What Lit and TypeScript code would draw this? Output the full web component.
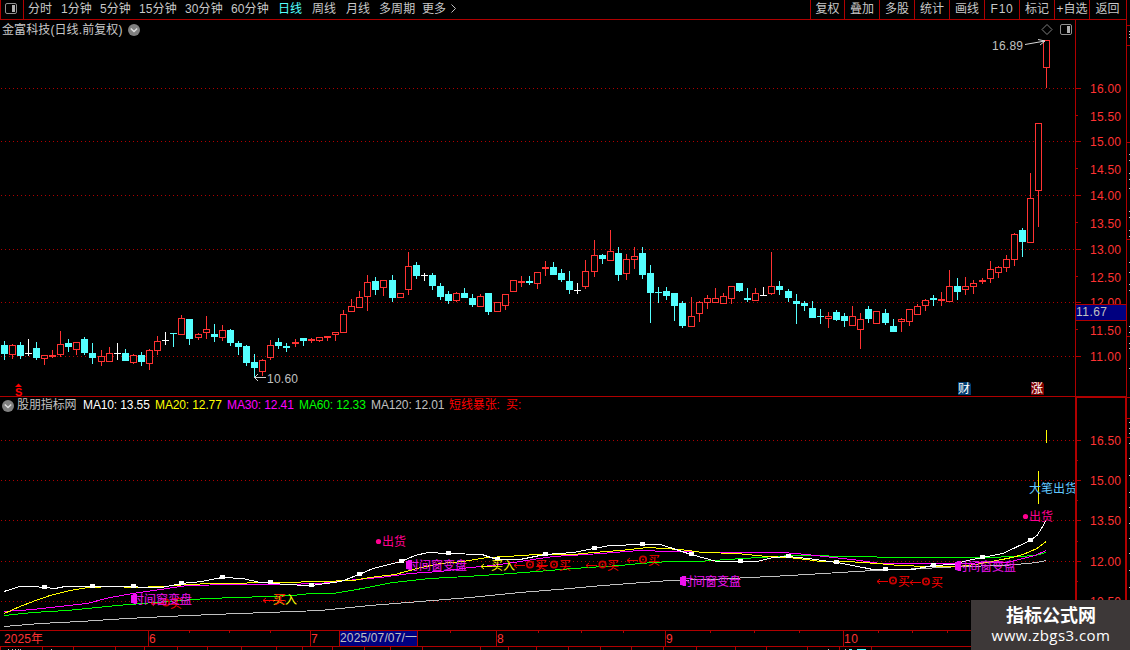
import { LitElement, html, svg, css } from "lit";
import { customElement } from "lit/decorators.js";

type Candle = [number, number, number, number, number, "u" | "d" | "w"];

// x, high, body top, body bottom, low, kind
const CANDLES: Candle[] = [
  [4,341,345,354,360,"d"],[12,344,345,355,359,"u"],[20,342,345,356,359,"d"],[28,339,353,354,356,"w"],
  [36,342,348,358,360,"d"],[44,355,355,359,365,"u"],[52,350,355,357,358,"u"],[60,331,344,355,357,"u"],
  [68,339,343,347,352,"d"],[76,342,342,350,355,"u"],[84,337,339,353,355,"d"],[92,343,353,358,364,"d"],
  [101,350,356,362,366,"u"],[109,347,353,362,362,"u"],[117,343,353,354,360,"w"],[125,349,353,361,361,"d"],
  [133,354,355,363,364,"u"],[141,352,355,362,366,"d"],[149,349,350,364,370,"u"],[157,336,341,351,355,"u"],
  [165,332,340,341,345,"w"],[173,333,333,334,347,"d"],[181,315,318,335,335,"u"],[189,319,319,339,345,"d"],
  [198,333,334,338,340,"u"],[206,316,329,333,339,"u"],[214,324,334,337,342,"d"],[222,325,330,338,341,"u"],
  [230,329,330,343,346,"d"],[238,341,343,347,355,"d"],[246,345,346,363,366,"d"],[254,354,362,368,378,"d"],
  [262,359,360,372,376,"u"],[270,340,345,358,360,"u"],[278,338,342,346,349,"d"],[286,343,346,348,352,"d"],
  [295,339,342,344,347,"u"],[303,338,338,341,346,"d"],[311,338,339,341,343,"u"],[319,337,337,341,342,"u"],
  [327,336,336,338,341,"u"],[335,332,332,335,341,"u"],[343,310,314,333,333,"u"],[351,299,306,312,312,"u"],
  [359,291,297,308,308,"u"],[367,275,282,297,311,"u"],[375,277,281,290,295,"d"],[383,280,280,288,296,"u"],
  [392,275,280,298,302,"d"],[400,293,293,298,298,"u"],[408,252,266,290,295,"u"],[416,262,265,276,279,"d"],
  [424,273,275,276,281,"w"],[432,273,275,286,290,"d"],[440,283,286,297,300,"d"],[448,291,294,301,304,"d"],
  [456,292,293,301,302,"u"],[464,288,293,298,298,"d"],[472,294,298,305,307,"d"],[480,294,296,307,307,"u"],
  [488,293,293,312,315,"d"],[497,302,302,312,312,"u"],[505,294,294,306,310,"u"],[513,280,280,292,292,"u"],
  [521,276,281,283,287,"u"],[529,276,281,283,285,"d"],[537,272,272,284,289,"u"],[545,261,267,269,276,"u"],
  [553,262,267,275,275,"d"],[561,269,273,280,282,"d"],[569,271,281,290,294,"d"],[577,283,290,291,294,"w"],
  [585,260,271,287,289,"u"],[594,240,255,272,277,"u"],[602,254,255,259,264,"d"],[610,230,251,261,261,"u"],
  [618,247,253,275,281,"d"],[626,254,259,274,280,"u"],[634,247,256,260,269,"u"],[642,247,253,275,279,"d"],
  [650,265,273,293,323,"d"],[658,287,292,293,303,"d"],[666,287,291,296,300,"d"],[674,293,293,306,321,"d"],
  [682,301,303,326,328,"d"],[691,297,316,327,327,"u"],[699,301,302,314,322,"u"],[707,295,298,303,309,"u"],
  [715,288,298,303,303,"u"],[723,293,296,304,304,"u"],[731,286,286,299,304,"u"],[739,283,283,291,292,"d"],
  [747,288,298,300,302,"d"],[755,288,293,301,301,"u"],[763,287,295,296,296,"w"],[771,252,286,294,295,"u"],
  [779,281,286,290,295,"d"],[788,289,291,298,302,"d"],[796,294,301,304,324,"d"],[804,301,303,306,311,"d"],
  [812,301,308,318,318,"d"],[820,309,316,317,324,"d"],[828,312,316,319,328,"u"],[836,310,312,320,321,"d"],
  [844,313,316,321,327,"d"],[852,306,316,326,326,"u"],[860,313,319,330,349,"u"],[868,306,309,319,323,"d"],
  [876,311,311,324,324,"u"],[885,309,313,323,325,"d"],[893,319,326,332,332,"d"],[901,318,319,322,332,"u"],
  [909,309,309,322,326,"u"],[917,304,306,315,315,"u"],[925,299,300,306,311,"u"],[933,295,298,300,306,"d"],
  [941,292,299,301,306,"u"],[949,270,286,302,302,"u"],[957,278,286,292,300,"d"],[965,277,286,290,295,"u"],
  [973,280,283,287,294,"u"],[982,278,280,282,284,"u"],[990,261,269,279,283,"u"],[998,266,267,273,278,"u"],
  [1006,255,259,268,272,"u"],[1014,233,234,260,266,"u"],[1022,228,230,242,257,"d"],[1030,173,198,243,243,"u"],
  [1038,123,123,191,227,"u"],[1046,40,40,68,88,"u"],
];

const COLORS = { u: "#ff3232", d: "#54ffff", w: "#ffffff" };

const AXIS_TOP: [string, number, number][] = [
  ["16.00",88,93],["15.50",115,121],["15.00",141,146],["14.50",168,174],["14.00",195,200],["13.50",222,228],
  ["13.00",249,254],["12.50",276,282],["12.00",302,307],["11.50",329,335],["11.00",356,361],
];
const AXIS_LOW: [string, number, number][] = [
  ["16.50",440,445],["15.00",480,485],["13.50",520,525],["12.00",561,566],["10.50",601,606],
];

const MA: { color: string; pts: string }[] = [
  { color: "#c0c0c0", pts: "4,626 40,623 80,621 127,618 167,616 213,614 267,612 320,610 370,605 420,601 470,597 520,592 570,588 603,585 670,580 710,579 750,577 790,575 840,572 873,570 900,569 943,567 960,566 1003,565 1027,563 1037,562 1046,560" },
  { color: "#00ff00", pts: "4,615 33,612 67,610 117,605 167,601 207,598 267,596 293,595 310,593 333,593 357,589 393,582 430,578 467,576 497,574 537,571 573,568 620,565 640,563 670,561 697,561 743,558 793,555 863,556 890,557 983,557 1020,556 1035,555 1046,552" },
  { color: "#ff00ff", pts: "4,611 33,609 60,606 87,603 110,597 133,593 167,588 187,585 233,584 283,584 320,583 347,580 380,577 410,573 440,571 470,567 493,565 520,561 553,556 587,554 640,550 670,551 727,552 783,552 807,554 833,557 860,560 880,563 943,563 1007,562 1023,558 1035,555 1046,550" },
  { color: "#ffff00", pts: "4,613 20,606 33,601 50,595 70,590 88,587 115,586 133,587 163,586 187,584 213,583 283,582 320,581 353,580 370,577 395,574 417,568 440,563 463,561 487,557 507,556 537,554 573,554 593,552 620,550 648,547 680,549 703,552 737,553 767,556 788,557 807,559 820,561 847,561 877,563 900,565 927,566 958,566 975,564 997,560 1012,557 1023,554 1037,548 1046,541" },
  { color: "#ffffff", pts: "4,591 20,586 26,586 33,586 44,587 55,588 65,586 92,586 133,586 143,587 162,587 181,583 202,581 222,577 243,578 260,582 270,582 283,584 311,585 341,581 359,574 373,568 401,561 415,555 428,552 448,553 482,554 497,559 520,559 545,554 573,552 594,548 610,545 642,544 660,544 670,547 691,554 717,561 740,561 757,561 773,557 788,556 808,558 837,562 863,567 873,569 885,569 913,569 933,565 953,564 968,560 982,557 1003,553 1030,540 1037,535 1042,527 1046,520" },
];

const MARKS: [number, number][] = [
  [44,587],[92,586],[133,586],[181,583],[222,577],[270,582],[311,585],[359,574],[401,561],[448,553],[497,559],
  [545,554],[594,548],[642,544],[691,554],[740,561],[788,556],[836,562],[885,569],[933,565],[982,557],[1030,540],
];

const PERIODS = ["分时", "1分钟", "5分钟", "15分钟", "30分钟", "60分钟", "日线", "周线", "月线", "多周期", "更多"];
const TOOLS = ["复权", "叠加", "多股", "统计", "画线", "F10", "标记", "+自选", "返回"];
const LEGEND: [string, string][] = [
  ["股朋指标网", "grey"], ["MA10: 13.55", "white"], ["MA20: 12.77", "yellow"], ["MA30: 12.41", "magenta"],
  ["MA60: 12.33", "green"], ["MA120: 12.01", "grey"], ["短线暴张:", "red"], ["买:", "red"],
];

const hline = (x1: number, x2: number, y: number, c = "#b00000", h = 1) =>
  svg`<rect x=${x1} y=${y} width=${x2 - x1} height=${h} fill=${c}/>`;
const vline = (x: number, y1: number, y2: number, c = "#b00000", w = 1) =>
  svg`<rect x=${x} y=${y1} width=${w} height=${y2 - y1} fill=${c}/>`;
const dotted = (y: number) =>
  svg`<line x1="1" x2="1074" y1=${y + 0.5} y2=${y + 0.5} stroke="#b00000" stroke-dasharray="1 3"/>`;
const label = (s: string, x: number, y: number, w: number, c = "#ff3232") =>
  svg`<text x=${x} y=${y} textLength=${w} fill=${c}>${s}</text>`;

const candle = ([x, hi, top, bot, lo, k]: Candle) => {
  const c = COLORS[k];
  const hollow = k === "u" && bot - top > 2;
  return svg`${hi < top ? vline(x, hi, top, c) : ""}${lo > bot ? vline(x, bot, lo, c) : ""}
    ${hollow
      ? svg`<rect x=${x - 2.5} y=${top + 0.5} width="6" height=${bot - top - 1} fill="#000" stroke=${c}/>`
      : svg`<rect x=${x - 3} y=${top} width="7" height=${bot - top} fill=${c}/>`}`;
};

const arrow = (x: number, y: number, w: number, c: string) =>
  svg`<path d=${`M${x + w} ${y + 0.5}H${x}M${x + 3} ${y - 2}L${x} ${y + 0.5}L${x + 3} ${y + 3}`} stroke=${c} fill="none"/>`;

const buySignal = (ax: number, aw: number, cx: number, tx: number, base: number) => svg`
  ${arrow(ax, base - 5, aw, "#e80000")}
  <circle cx=${cx} cy=${base - 5.5} r="3.2" fill="none" stroke="#c80000" stroke-width="1.8"/>
  <rect x=${cx - 0.7} y=${base - 6.2} width="1.5" height="1.5" fill="#f00"/>
  <text x=${tx} y=${base} fill="#ff0000">买</text>`;

const timeWindow = (x: number, base: number) => svg`
  <text x=${x + 1} y=${base} fill="#f010f0">时间窗变盘</text>
  <path d=${`M${x} ${base - 9}h2v-1h4v10h-3v-1h-3z`} fill="#f010f0"/>`;

const chevron = html`<svg width="12" height="12" viewBox="0 0 12 12"><circle cx="6" cy="6" r="6" fill="#808080"/><path d="M2.8 4.6L6 7.6L9.2 4.6" fill="none" stroke="#e0e0e0" stroke-width="1.4"/></svg>`;

@customElement("app-root")
export class AppRoot extends LitElement {
  static styles = css`
    :host { display: block; width: 1130px; height: 650px; overflow: hidden; background: #000; position: relative;
      font: 12px/16px "Liberation Sans", "Noto Sans CJK SC", sans-serif; color: #c8c8c8; }
    svg { display: block; flex: none; }
    text { font: 12px "Liberation Sans", "Noto Sans CJK SC", sans-serif; white-space: pre; }
    .rights { font-weight: bold; font-size: 11px; }
    .shell { display: grid; grid-template-columns: 1127px 3px; height: 650px; }
    .main { display: flex; flex-direction: column; min-width: 0; }
    .bar { display: flex; box-sizing: border-box; height: 20px; border-bottom: 1px solid #b00000; border-right: 1px solid #b00000; white-space: nowrap; }
    .toggle { width: 22px; border-left: 1px solid #b00000; border-right: 1px solid #b00000; }
    .periods { display: grid; grid-template-columns: 33px 39px 39px 46px 46px 47px 34px 34px 33px 43px 28px 10px; padding-left: 4px; line-height: 19px; letter-spacing: .1px; flex: 1; }
    .active { color: #54ffff; }
    .tools { display: flex; line-height: 19px; }
    .tool { box-sizing: border-box; width: 35px; border-left: 1px solid #b00000; text-align: center; }
    .tool:first-child { width: 34px; }
    .tool:nth-child(6) { letter-spacing: .7px; }
    .tool:last-child { width: 37px; padding-right: 1px; }
    .title { display: flex; height: 19px; box-sizing: border-box; padding-left: 2px; align-items: center; }
    .name { width: 126px; line-height: 20px; letter-spacing: .1px; white-space: nowrap; }
    .corner { margin-left: auto; margin-right: 2px; }
    .legend { display: grid; grid-template-columns: 15px 66px 72px 72px 72px 72px 78px 57px 30px; height: 17px; padding-left: 2px; align-items: center; white-space: nowrap; letter-spacing: -.12px; line-height: 17px; box-sizing: border-box;
      border-top: 1px solid #b00000; }
    .axis-edge { display: grid; grid-template-columns: 1075px 52px; }
    .cell { border: 2px solid #b00000; border-bottom: 0; box-sizing: border-box; height: 17px; }
    .grey { color: #c0c0c0; } .white { color: #fff; } .yellow { color: #ff0; } .magenta { color: #f0f; }
    .green { color: #0f0; } .red { color: #f00; }
    .brand { position: absolute; right: 0; bottom: 0; width: 159px; height: 50px; background: #3d3838; color: #fff; text-align: center; box-sizing: border-box; padding: 3px 0 0 1px; }
    .brand-name { font: bold 18px/23px "Noto Sans CJK SC", sans-serif; }
    .brand-url { font: 15px/18px "Open Sans", sans-serif; letter-spacing: .45px; }
  `;

  render() {
    return html`
      <div class="shell">
        <div class="main">
          <div class="bar">
            <svg class="toggle" width="22" height="19" viewBox="1 0 22 19">
              <rect x="5.5" y="3.5" width="11" height="10" rx="1.5" fill="none" stroke="#909090"/>
              <rect x="12" y="5" width="3" height="7" fill="#b0b0b0"/>
            </svg>
            <div class="periods">
              ${PERIODS.map((p) => html`<span class=${p === "日线" ? "active" : ""}>${p}</span>`)}
              <svg width="8" height="18" viewBox="0 0 8 18"><path d="M1.5 4.5L5.5 8.5L1.5 12.5" fill="none" stroke="#c0c0c0"/></svg>
            </div>
            <div class="tools">${TOOLS.map((t) => html`<span class="tool">${t}</span>`)}</div>
          </div>
          <div class="axis-edge">
            <div class="title">
              <span class="name">金富科技(日线.前复权)</span>${chevron}
              <svg class="corner" width="32" height="19" viewBox="1041 20 32 19">
                <path d="M1042 29.5L1047 24.5L1052 29.5L1047 34.5Z" fill="none" stroke="#808080"/>
                <rect x="1060.5" y="24.5" width="11" height="10" rx="1.5" fill="none" stroke="#909090"/>
                <rect x="1067" y="26" width="3" height="7" fill="#b0b0b0"/>
              </svg>
            </div>
            <svg width="52" height="19" viewBox="1075 20 52 19">${vline(1075, 20, 39)}${vline(1126, 20, 39)}</svg>
          </div>
          ${this.pricePanel()}
          <div class="axis-edge">
            <div class="legend">${chevron}${LEGEND.map(([t, c]) => html`<span class=${c}>${t}</span>`)}</div>
            <div class="cell"></div>
          </div>
          ${this.indicatorPanel()}
          ${this.dateBar()}
        </div>
        ${this.sideStrip()}
      </div>
      <div class="brand"><div class="brand-name">指标公式网</div><div class="brand-url">www.zbgs3.com</div></div>
    `;
  }

  private pricePanel() {
    return html`<svg width="1127" height="357" viewBox="0 39 1127 357">
      ${[88, 141, 195, 249, 302, 356].map(dotted)}
      ${CANDLES.map(candle)}
      ${label("16.89", 992, 50, 31, "#c0c0c0")}
      <path d="M1025 44.5L1045 41M1038 39.5L1045 41L1040 45" stroke="#d8d8d8" fill="none"/>
      ${label("10.60", 267, 383, 31, "#c0c0c0")}
      <path d="M254 377.5H266M258 374L254.5 377.5L258 381" stroke="#d0d0d0" fill="none"/>
      <path d="M15 387L18.5 383.5L22 387Z" fill="#f00"/>
      <text class="rights" x="15" y="395.5" fill="#f00">S</text>
      <path d="M958 382h11l2 2v11h-13z" fill="#003c70"/>${label("财", 958, 393, 12, "#fff")}
      <path d="M1031 382h11l2 2v11h-13z" fill="#800000"/>${label("涨", 1031, 393, 12, "#fff")}
      ${vline(1075, 39, 396)}${vline(1126, 39, 396)}
      ${AXIS_TOP.map(([t, y, b], i) => svg`${hline(1076, i % 2 ? 1078 : 1081, y)}${label(t, 1090, b, 31)}`)}
      <rect x="1075.5" y="304.5" width="51" height="16" fill="#000080" stroke="#b00000"/>
      ${label("11.67", 1076, 316, 31, "#c0c0c0")}
    </svg>`;
  }

  private indicatorPanel() {
    return html`<svg width="1127" height="217" viewBox="0 413 1127 217">
      ${[440, 480, 520, 561, 601].map(dotted)}
      ${MA.map((m) => svg`<polyline points=${m.pts} transform="translate(0 .5)" fill="none" stroke=${m.color} shape-rendering="crispEdges"/>`)}
      ${MARKS.map(([x, y]) => svg`<rect x=${x - 2} y=${y - 2} width="5" height="4" fill="#fff"/>`)}
      ${buySignal(151, 13, 166, 170, 608)}
      ${timeWindow(131, 604)}${timeWindow(406, 570)}${timeWindow(680, 586)}${timeWindow(955, 571)}
      ${arrow(263, 600, 14, "#f00")}
      <text x="273" y="604" fill="#ff0">买入</text><text x="274" y="604" fill="#f00">买</text>
      <circle cx="378.5" cy="541.5" r="2.6" fill="#ff0090"/><text x="382" y="546" fill="#ff0090">出货</text>
      ${arrow(481, 566, 11, "#ff0")}<text x="491" y="570" fill="#ff0">买入</text>
      ${buySignal(514, 11, 530, 535, 570)}
      ${buySignal(537, 11, 554, 559, 570)}
      ${buySignal(586, 11, 602.5, 607, 570)}
      ${buySignal(627, 11, 643, 648, 565)}
      ${buySignal(877, 11, 893, 898, 586)}
      ${buySignal(910, 11, 926, 931, 587)}
      ${vline(1038, 471, 504, "#ff0")}${vline(1046, 430, 443, "#ff0")}
      <text x="1029" y="493" fill="#60c8ff">大笔出货</text>
      <circle cx="1025.5" cy="516.5" r="2.6" fill="#ff0090"/><text x="1029" y="521" fill="#ff0090">出货</text>
      <rect x="1075" y="413" width="52" height="217" fill="#000"/>
      ${vline(1075, 413, 630, "#b00000", 2)}${vline(1125, 413, 630, "#b00000", 2)}
      ${AXIS_LOW.map(([t, y, b]) => svg`${hline(1077, 1081, y)}${label(t, 1090, b, 31)}`)}
      ${[460, 500, 541, 581].map((y) => hline(1077, 1078, y))}
    </svg>`;
  }

  private dateBar() {
    return html`<svg width="1127" height="20" viewBox="0 630 1127 20">
      ${hline(0, 1127, 630)}${hline(0, 1127, 646)}
      ${[148, 310, 496, 665, 843].map((x) => vline(x, 630, 646))}
      ${[189, 229, 270, 450, 538, 581, 623, 710, 754, 799, 878, 912, 947].map((x) => vline(x, 631, 633))}
      ${[0, 42, 73, 115, 144, 177, 207, 241, 276, 302, 332, 364, 390, 422, 480, 508, 536, 568, 600, 631, 663, 696, 735, 766, 807, 839, 871].map((x) => vline(x, 646, 650))}
      ${label("2025年", 4, 643, 39)}${label("6", 149, 643, 7)}${label("7", 311, 643, 7)}
      ${label("8", 497, 643, 7)}${label("9", 666, 643, 7)}${label("10", 844, 643, 14)}
      <rect x="339.5" y="630.5" width="78" height="16" fill="#000080" stroke="#b00000"/>
      ${label("2025/07/07/一", 340, 642, 77, "#c0c0c0")}
      ${[8, 12, 15, 18, 20, 51, 828, 845].map((x) => vline(x, 649, 650, "#c0c0c0"))}
      ${hline(849, 852, 649, "#54ffff")}${hline(857, 866, 649, "#54ffff")}
    </svg>`;
  }

  private sideStrip() {
    const dots = [154, 160, 173, 179, 188, 211, 217, 230, 236, 262, 272, 284, 290, 326, 332, 343, 348, 368, 422, 428, 433, 443, 458, 475, 492, 507, 523, 538, 553, 570, 587];
    return html`<svg width="3" height="650" viewBox="1127 0 3 650">
      ${[25, 45, 142, 239, 336, 397, 418, 437].map((y) => hline(1127, 1130, y))}
      ${[31, 34, 37].map((y) => hline(1129, 1130, y, "#c0c0c0"))}
      ${dots.map((y) => hline(1129, 1130, y, "#c0c0c0"))}
    </svg>`;
  }
}
